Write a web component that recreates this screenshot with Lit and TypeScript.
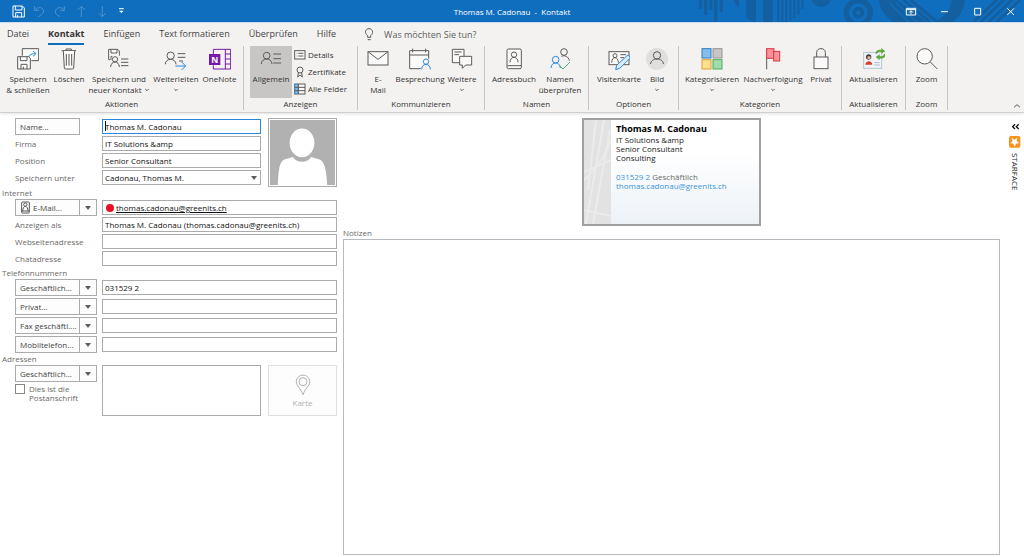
import { LitElement, html, svg, css, nothing } from "lit";
import { customElement, property } from "lit/decorators.js";
import { classMap } from "lit/directives/class-map.js";

interface Command {
  icon: string;
  lines: string[];
  menu?: boolean;
  active?: boolean;
}

interface Group {
  id: string;
  title: string;
  commands: Command[];
  list?: { icon: string; text: string }[];
}

const person = (x: number, y: number, r: number, w: number) => svg`
  <circle cx=${x} cy=${y} r=${r} />
  <path d="M${x - w} ${y + r + 15}C${x - w} ${y + r + 5} ${x - w / 2} ${y + r} ${x} ${y + r}S${x + w} ${y + r + 5} ${x + w} ${y + r + 15}" />`;

/* Each drawing lives on its own canvas, three units to one pixel. */
const icons: Record<string, { box: string; art: unknown }> = {
  saveClose: {
    box: "50 145 66 66",
    art: svg`
      <path class="paper" d="M66 168V147H115V183H93" />
      <path class="blue" d="M84 180C84 168 90 162 105 162M98 154L107 162L98 170" />
      <path class="paper" d="M52 171H85L90 176V208H52Z" />
      <path d="M60 171V183H80V171M62 208V194H80V208M69 201V208" />`,
  },
  trash: {
    box: "174 145 66 66",
    art: svg`
      <path d="M185 153H228M198 153V148H214V153" />
      <path class="paper" d="M190 154L193 205Q193 208 197 208H217Q221 208 221 205L224 154" />
      <path d="M199 163V198M207 163V198M215 163V198" />`,
  },
  saveNew: {
    box: "327 145 66 66",
    art: svg`
      <path class="paper" d="M334 180H329V149H356L361 154V168" />
      <path d="M336 149V160H354V149M336 180V170H340" />
      ${person(348, 179, 8, 13)}
      <path d="M366 178H388M366 188H388M366 198H388" />`,
  },
  forward: {
    box: "498 145 66 66",
    art: svg`
      ${person(515, 168, 11, 16)}
      <path d="M536 162H559M536 173H559M540 184H552" />
      <path class="blue" d="M529 199H560M548 187L560 199L548 211" />`,
  },
  onenote: {
    box: "624 145 66 66",
    art: svg`
      <path class="purple" d="M637 163V149H689V208H637V197M673 149V208M673 163H689M673 178H689M673 193H689" />
      <rect class="purple-fill" x="624" y="163" width="34" height="33" />
      <text class="glyph" x="641" y="189" text-anchor="middle">N</text>`,
  },
  general: {
    box: "780 145 66 66",
    art: svg`${person(800, 168, 10, 16)}<path d="M820 163H843M820 177H843M820 190H843" />`,
  },
  details: {
    box: "883 145 36 36",
    art: svg`<rect class="paper" x="885" y="150" width="31" height="25" />
      <path d="M891 158H893M896 158H911M891 166H893M896 166H911" />`,
  },
  certificate: {
    box: "880 193 36 36",
    art: svg`<circle cx="898" cy="205" r="9" /><path d="M893 214L891 226L898 220L905 226L903 214" />`,
  },
  fields: {
    box: "883 243 36 36",
    art: svg`<rect class="paper" x="885" y="246" width="31" height="30" />
      <rect class="blue-solid" x="886" y="247" width="9" height="28" />
      <path d="M885 256H916M885 266H916M896 246V276" />`,
  },
  mail: {
    box: "412 86 66 66",
    art: svg`<rect class="paper" x="415" y="97" width="60" height="40" /><path d="M416 98L445 120L474 98" />`,
  },
  meeting: {
    box: "539 86 66 66",
    art: svg`
      <path class="paper" d="M574 148H541V94H598V118" />
      <path d="M541 107H598M550 88V99M589 88V99" />
      <g class="blue">${person(590, 127, 8, 13)}</g>`,
  },
  more: {
    box: "664 86 66 66",
    art: svg`
      <path class="paper" d="M690 130H668V90H703V111" />
      <path d="M674 98H696M674 106H688" />
      <path class="paper" d="M690 111H726V137H708L698 147V137H690Z" />`,
  },
  book: {
    box: "817 86 66 66",
    art: svg`
      <rect class="paper" x="829" y="89" width="43" height="59" rx="4" />
      <path d="M830 139H871" />${person(850, 106, 8, 12)}`,
  },
  names: {
    box: "961 86 66 66",
    art: svg`
      <circle cx="1006" cy="98" r="10" />
      <path d="M998 111C1008 106 1020 112 1022 124" />
      <g class="blue">${person(981, 121, 10, 14)}</g>
      <path class="green" d="M993 140L1003 149L1024 128" />`,
  },
  card: {
    box: "54 86 66 66",
    art: svg`
      <rect class="paper" x="57" y="97" width="60" height="39" />
      ${person(75, 109, 6, 10)}
      <path d="M91 106H108M91 115H102" />
      <path class="blue pale" d="M77 151L80 138L112 108Q119 107 121 116L89 147Z" />`,
  },
  picture: {
    box: "170 86 66 66",
    art: svg`<circle class="disc" cx="203" cy="119" r="33" />${person(203, 108, 11, 19)}`,
  },
  categories: {
    box: "335 86 66 66",
    art: svg`
      <rect class="c-blue" x="338" y="88" width="27" height="28" />
      <rect class="c-gray" x="371" y="88" width="27" height="28" />
      <rect class="c-yellow" x="338" y="121" width="27" height="28" />
      <rect class="c-green" x="371" y="121" width="27" height="28" />`,
  },
  flag: {
    box: "516 86 66 66",
    art: svg`<path d="M530 88V150" />
      <rect class="c-red" x="530" y="88" width="22" height="29" />
      <rect class="c-red" x="551" y="96" width="18" height="29" />`,
  },
  lock: {
    box: "662 86 66 66",
    art: svg`<path d="M682 113V99C682 84 708 84 708 99V113" />
      <rect class="paper" x="674" y="113" width="42" height="35" />`,
  },
  refresh: {
    box: "818 86 66 66",
    art: svg`
      <rect class="id" x="820" y="99" width="54" height="48" />
      <circle class="hair" cx="835" cy="113" r="8" />
      <circle class="skin" cx="836" cy="115" r="5" />
      <path class="shirt" d="M825 136C825 122 846 122 846 136Z" />
      <path class="idline" d="M852 130H868M852 137H868" />
      <path class="leaf" d="M855 103C856 92 866 89 873 92V86L885 96L873 103V98C866 96 862 98 860 103Z" />
      <path class="leaf" d="M886 104C886 115 876 120 868 117V123L856 113L868 105V110C874 112 880 110 881 104Z" />`,
  },
  zoom: {
    box: "977 86 66 66",
    art: svg`<circle class="paper" cx="1003" cy="111" r="23" /><path d="M1020 128L1041 149" />`,
  },
  bulb: {
    box: "408 22 33 39",
    art: svg`<path d="M419 50V45C408 37 412 24 423 24S438 37 428 45V50ZM419 57H428" />`,
  },
  contact: {
    box: "60 276 33 39",
    art: svg`<rect x="65" y="279" width="23" height="33" rx="2" /><path d="M65 306H88" />${person(76, 287, 5, 8)}`,
  },
  pin: {
    box: "882 336 48 66",
    art: svg`<path d="M906 398C900 380 886 372 886 359C886 333 926 333 926 359C926 372 912 380 906 398Z" />
      <circle cx="906" cy="359" r="12" />`,
  },
  disk: {
    box: "36 13 39 39",
    art: svg`<path d="M39 16H67L73 22V49H39ZM46 16V28H66V16M47 49V36H65V49M53 43V49" />`,
  },
  undo: { box: "99 13 39 39", art: svg`<path d="M104 16V29H117M104 29C112 16 131 20 131 31C131 39 122 43 115 49" />` },
  redo: { box: "162 13 39 39", art: svg`<path d="M193 16V29H181M193 29C186 16 166 20 166 33C166 40 172 45 180 47" />` },
  up: { box: "222 13 39 39", art: svg`<path d="M241 49V17M230 28L241 17L252 28" />` },
  down: { box: "285 13 39 39", art: svg`<path d="M304 16V48M293 37L304 48L315 37" />` },
  custom: {
    box: "354 13 27 39",
    art: svg`<path d="M360 24H374" /><path class="white-fill" d="M360 30H374L367 37Z" />`,
  },
  ribbonMode: {
    box: "795 8 39 39",
    art: svg`<path d="M799 18H827V38H799ZM799 22H827M813 36V26M807 31L813 25L819 31" />`,
  },
  minimize: { box: "894 8 39 39", art: svg`<path d="M903 28H924" />` },
  maximize: { box: "992 8 39 39", art: svg`<path d="M1003 18H1021V38H1003Z" />` },
  close: { box: "1091 8 39 39", art: svg`<path d="M1101 18L1121 38M1121 18L1101 38" />` },
  chevronUp: { box: "1266 252 30 24", art: svg`<path d="M1272 268L1281 260L1290 268" />` },
  chevronDown: { box: "0 0 18 12", art: svg`<path d="M4 3L9 8L14 3" />` },
  collapse: {
    box: "1323 33 27 27",
    art: svg`<path class="bold" d="M1335 40L1328 47L1335 54M1346 40L1339 47L1346 54" />`,
  },
  star: {
    box: "1317 80 36 36",
    art: svg`<rect class="orange" x="1317" y="80" width="34" height="35" rx="5" />
      <path class="white-fill" d="M1324 85L1333 91L1342 85L1340 95L1348 101L1338 103L1334 112L1330 103L1321 101L1328 96Z" />`,
  },
};

@customElement("ui-icon")
export class UiIcon extends LitElement {
  @property() name = "";

  static styles = css`
    :host { display: block; flex: none; line-height: 0; }
    svg { fill: none; stroke: var(--icon-ink, #5c5a58); stroke-width: var(--icon-weight, 3); }
    .paper { fill: #fafafa; }
    .blue { stroke: #2b88d8; }
    .pale { fill: #d8ebf9; }
    .green { stroke: #4fae66; }
    .purple { stroke: #7719aa; }
    .purple-fill { fill: #7719aa; stroke: none; }
    .glyph { fill: #fff; stroke: none; font: bold 26px "Open Sans", sans-serif; }
    .blue-solid { fill: #83beec; stroke: #3a96dd; stroke-width: 2; }
    .disc { fill: #e1dfdd; stroke: none; }
    .c-blue { fill: #83beec; stroke: #2f7fc1; }
    .c-gray { fill: #c8c6c4; stroke: #979593; }
    .c-yellow { fill: #fce08e; stroke: #e0a030; }
    .c-green { fill: #a1dba8; stroke: #4fae66; }
    .c-red { fill: #ff9199; stroke: #d83b45; }
    .id { fill: #eef4f9; stroke: #b7c3cf; }
    .hair { fill: #3b3b3b; stroke: none; }
    .skin { fill: #eab28a; stroke: none; }
    .shirt { fill: #d9402a; stroke: none; }
    .idline { stroke: #a9bccd; }
    .leaf { fill: #5fa83c; stroke: none; }
    .white-fill { fill: #fff; stroke: none; }
    .orange { fill: #f7941d; stroke: none; }
    .bold { stroke: #111; stroke-width: 4; }
  `;

  render() {
    const icon = icons[this.name];
    if (!icon) return nothing;
    const [, , w, h] = icon.box.split(" ").map(Number);
    return html`<svg viewBox=${icon.box} width=${w / 3} height=${h / 3} aria-hidden="true">${icon.art}</svg>`;
  }
}

const groups: Group[] = [
  {
    id: "aktionen",
    title: "Aktionen",
    commands: [
      { icon: "saveClose", lines: ["Speichern", "& schließen"] },
      { icon: "trash", lines: ["Löschen"] },
      { icon: "saveNew", lines: ["Speichern und", "neuer Kontakt"], menu: true },
      { icon: "forward", lines: ["Weiterleiten", ""], menu: true },
      { icon: "onenote", lines: ["OneNote"] },
    ],
  },
  {
    id: "anzeigen",
    title: "Anzeigen",
    commands: [{ icon: "general", lines: ["Allgemein"], active: true }],
    list: [
      { icon: "details", text: "Details" },
      { icon: "certificate", text: "Zertifikate" },
      { icon: "fields", text: "Alle Felder" },
    ],
  },
  {
    id: "kommunizieren",
    title: "Kommunizieren",
    commands: [
      { icon: "mail", lines: ["E-", "Mail"] },
      { icon: "meeting", lines: ["Besprechung"] },
      { icon: "more", lines: ["Weitere", ""], menu: true },
    ],
  },
  {
    id: "namen",
    title: "Namen",
    commands: [
      { icon: "book", lines: ["Adressbuch"] },
      { icon: "names", lines: ["Namen", "überprüfen"] },
    ],
  },
  {
    id: "optionen",
    title: "Optionen",
    commands: [
      { icon: "card", lines: ["Visitenkarte"] },
      { icon: "picture", lines: ["Bild", ""], menu: true },
    ],
  },
  {
    id: "kategorien",
    title: "Kategorien",
    commands: [
      { icon: "categories", lines: ["Kategorisieren", ""], menu: true },
      { icon: "flag", lines: ["Nachverfolgung", ""], menu: true },
      { icon: "lock", lines: ["Privat"] },
    ],
  },
  { id: "aktualisieren", title: "Aktualisieren", commands: [{ icon: "refresh", lines: ["Aktualisieren"] }] },
  { id: "zoomen", title: "Zoom", commands: [{ icon: "zoom", lines: ["Zoom"] }] },
];

@customElement("contact-ribbon")
export class ContactRibbon extends LitElement {
  static styles = css`
    :host { display: block; background: #f3f2f1; color: #333; border-bottom: 1px solid #d2d0ce; box-shadow: 0 1px 3px #0000001f; }
    button { font: inherit; color: inherit; background: none; border: 0; padding: 0; margin: 0; }
    .tabs { display: flex; align-items: center; height: 23px; padding-left: 7px; gap: 19px; font-size: 9px; }
    .tab { height: 20px; border-bottom: 2px solid transparent; white-space: nowrap; box-sizing: border-box; color: #444; }
    .tab.current { font-weight: bold; border-color: #106ebe; color: #333; }
    .ask { display: flex; align-items: center; gap: 9px; margin-left: 9px; }
    .ask input { font: inherit; font-size: 9px; width: 140px; border: 0; padding: 0; background: none; outline: 0; }
    .ask input::placeholder { color: #605e5c; opacity: 1; }
    .bar { display: flex; padding-bottom: 2px; }
    .group { border-right: 1px solid #c8c6c4; box-sizing: border-box; height: 64px; display: flex; flex-direction: column; }
    .commands { display: grid; height: 54px; font-size: 8px; }
    .title { text-align: center; font-size: 8px; line-height: 12px; }
    .aktionen { width: 244px; }
    .aktionen .commands { grid-template-columns: 48px 34px 66px 48px 39px; padding-left: 4px; }
    .anzeigen { width: 114px; }
    .anzeigen .commands { grid-template-columns: 42px 60px; column-gap: 2px; padding-left: 6px; }
    .kommunizieren { width: 127px; }
    .kommunizieren .commands { grid-template-columns: 30px 54px 30px; padding-left: 5px; }
    .namen { width: 104px; }
    .namen .commands { grid-template-columns: 48px 44px; padding-left: 5px; }
    .optionen { width: 90px; }
    .optionen .commands { grid-template-columns: 50px 26px; padding-left: 5px; }
    .kategorien { width: 163px; }
    .kategorien .commands { grid-template-columns: 58px 64px 32px; padding-left: 4px; }
    .aktualisieren { width: 64px; }
    .aktualisieren .commands, .zoomen .commands { grid-template-columns: 1fr; }
    .zoomen { width: 42px; }
    .command { display: flex; flex-direction: column; align-items: center; padding-top: 2px; white-space: nowrap; line-height: 11px; height: 52px; }
    .command ui-icon { margin-bottom: 3px; }
    .command.active { background: #c8c6c4; }
    .line { display: flex; align-items: center; justify-content: center; gap: 2px; min-height: 11px; }
    .line ui-icon { margin: 0; }
    .list { display: flex; flex-direction: column; }
    .list button { display: flex; align-items: center; gap: 2px; white-space: nowrap; height: 17px; }
    .end { flex: 1; display: flex; align-items: flex-end; justify-content: flex-end; padding-right: 2px; }
  `;

  render() {
    const tabs = ["Datei", "Kontakt", "Einfügen", "Text formatieren", "Überprüfen", "Hilfe"];
    return html`
      <nav class="tabs">
        ${tabs.map((t) => html`<button class=${classMap({ tab: true, current: t === "Kontakt" })}>${t}</button>`)}
        <label class="ask"><ui-icon name="bulb"></ui-icon>
          <input aria-label="Was möchten Sie tun?" placeholder="Was möchten Sie tun?" /></label>
      </nav>
      <div class="bar">
        ${groups.map(
          (g) => html`<section class="group ${g.id}">
            <div class="commands">
              ${g.commands.map((c) => this.command(c))}
              ${g.list
                ? html`<div class="list">${g.list.map((l) => html`<button><ui-icon name=${l.icon}></ui-icon>${l.text}</button>`)}</div>`
                : nothing}
            </div>
            <div class="title">${g.title}</div>
          </section>`
        )}
        <div class="end"><button aria-label="Menüband reduzieren"><ui-icon name="chevronUp"></ui-icon></button></div>
      </div>`;
  }

  private command(c: Command) {
    return html`<button class=${classMap({ command: true, active: !!c.active })}>
      <ui-icon name=${c.icon}></ui-icon>
      ${c.lines.map(
        (l, i) => html`<span class="line">${l}${c.menu && i === c.lines.length - 1
          ? html`<ui-icon name="chevronDown"></ui-icon>` : nothing}</span>`
      )}
    </button>`;
  }
}

@customElement("contact-form")
export class ContactForm extends LitElement {
  static styles = css`
    :host { display: block; width: 337px; flex: none; font-size: 8px; color: #6b6967; }
    * { box-sizing: border-box; }
    button, input, select, textarea { font: inherit; margin: 0; border-radius: 0; }
    .section { display: grid; grid-template-columns: 87px 160px 75px; grid-auto-rows: 17px; align-items: center; padding-left: 15px; }
    .section > .field { grid-column: 2 / 4; }
    .section.phones { row-gap: 2px; }
    .identity { padding-bottom: 1px; }
    .identity > .field { grid-column: 2; width: 159px; }
    h2 { margin: 0; padding-left: 2px; font-size: 8px; font-weight: normal; line-height: 12px; }
    .field { position: relative; display: flex; align-items: center; height: 15px; border: 1px solid #ababab; background: #fff; }
    .field input, .field select { flex: 1; min-width: 0; height: 13px; border: 0; padding: 0 2px; background: none; color: #111; outline: 0; appearance: none; }
    .field.focus { border-color: #2b88d8; }
    .caret { position: absolute; left: 2px; top: 1px; width: 1px; height: 10px; background: #111; }
    .arrow { border: 3px solid transparent; border-top: 4px solid #605e5c; border-bottom: 0; }
    .choice .arrow { position: absolute; right: 3px; pointer-events: none; }
    .dot { width: 8px; height: 8px; border-radius: 50%; background: #e81123; margin-left: 3px; }
    .field .mail { text-decoration: underline; }
    .box { height: 17px; background: #fdfdfd; border: 1px solid #ababab; padding: 0 0 0 4px; width: 65px; color: #444; text-align: left; white-space: nowrap; display: flex; align-items: center; gap: 2px; }
    .split { display: flex; }
    .split .drop { width: 17px; padding: 0; border-left: 0; justify-content: center; }
    .photo { grid-column: 3; grid-row: 1 / 5; width: 69px; height: 69px; justify-self: end; align-self: start; border: 1px solid #ababab; padding: 1px; background: #fff; }
    .photo svg { display: block; width: 100%; height: 100%; }
    .address { grid-auto-rows: auto; align-items: start; }
    .address textarea { width: 159px; height: 51px; border: 1px solid #ababab; resize: none; outline: 0; display: block; }
    .check { display: flex; gap: 4px; padding-top: 2px; line-height: 9px; }
    .check input { appearance: none; width: 10px; height: 10px; border: 1px solid #8a8886; background: #fff; flex: none; }
    .map { width: 69px; height: 51px; justify-self: end; border: 1px solid #e1dfdd; background: #fdfdfd; color: #b3b0ad; display: flex; flex-direction: column; align-items: center; justify-content: center; gap: 1px; padding: 0; --icon-ink: #b3b0ad; }
  `;

  private split(text: string, icon = "") {
    return html`<div class="split">
      <button class="box">${icon ? html`<ui-icon name=${icon}></ui-icon>` : nothing}${text}</button>
      <button class="box drop" aria-label="Auswahl ${text}"><span class="arrow"></span></button>
    </div>`;
  }

  private plain(id: string, label: string, value = "") {
    return html`<label for=${id}>${label}</label><div class="field"><input id=${id} .value=${value} /></div>`;
  }

  render() {
    return html`
      <div class="section identity">
        <button class="box">Name...</button>
        <div class="field focus"><span class="caret"></span><input aria-label="Name" .value=${"Thomas M. Cadonau"} /></div>
        ${this.plain("firma", "Firma", "IT Solutions &amp")}
        ${this.plain("position", "Position", "Senior Consultant")}
        <label for="unter">Speichern unter</label>
        <div class="field choice"><select id="unter"><option>Cadonau, Thomas M.</option></select><span class="arrow"></span></div>
        <div class="photo">
          <svg viewBox="806 28 199 199" preserveAspectRatio="none" role="img" aria-label="Kontaktbild">
            <rect x="806" y="28" width="199" height="199" fill="#b1b1b1" />
            <ellipse cx="904" cy="98" rx="38" ry="44" fill="#fff" />
            <path fill="#fff" d="M830 227C832 175 836 155 850 149L876 141C890 161 918 161 932 141L958 149C972 155 978 175 981 227Z" />
          </svg>
        </div>
      </div>
      <h2>Internet</h2>
      <div class="section">
        ${this.split("E-Mail...", "contact")}
        <div class="field"><span class="dot"></span><input class="mail" aria-label="E-Mail" .value=${"thomas.cadonau@greenits.ch"} /></div>
        ${this.plain("anzeige", "Anzeigen als", "Thomas M. Cadonau (thomas.cadonau@greenits.ch)")}
        ${this.plain("web", "Webseitenadresse")}
        ${this.plain("chat", "Chatadresse")}
      </div>
      <h2>Telefonnummern</h2>
      <div class="section phones">
        ${[["Geschäftlich...", "031529 2"], ["Privat...", ""], ["Fax geschäftl....", ""], ["Mobiltelefon...", ""]].map(
          ([label, value]) => html`${this.split(label)}<div class="field"><input aria-label=${label} .value=${value} /></div>`
        )}
      </div>
      <h2>Adressen</h2>
      <div class="section address">
        <div>
          ${this.split("Geschäftlich...")}
          <label class="check"><input type="checkbox" /><span>Dies ist die<br />Postanschrift</span></label>
        </div>
        <textarea aria-label="Adresse"></textarea>
        <button class="map" disabled><ui-icon name="pin"></ui-icon>Karte</button>
      </div>`;
  }
}

@customElement("app-root")
export class AppRoot extends LitElement {
  static styles = css`
    :host { display: flex; flex-direction: column; min-height: 100vh; background: #fff; font-family: "Open Sans", "Noto Sans", sans-serif; font-size: 8px; color: #444; }
    * { box-sizing: border-box; }
    button { font: inherit; color: inherit; background: none; border: 0; padding: 0; margin: 0; }
    .titlebar { position: relative; display: grid; grid-template-columns: 1fr auto 1fr; align-items: center; height: 23px; background: #106ebe; color: #fff; border-bottom: 1px solid #c7dcee; --icon-ink: #fff; }
    .pattern { position: absolute; right: 0; top: 0; width: 384px; height: 22px; }
    .quick { display: flex; gap: 8px; padding-left: 12px; }
    .quick .off { opacity: 0.25; }
    .caption { font-size: 8px; }
    .window { position: relative; display: flex; justify-content: flex-end; gap: 20px; padding-right: 7px; }
    .work { flex: 1; display: flex; padding: 5px 0 2px; }
    .right { flex: 1; min-width: 0; display: flex; flex-direction: column; margin-left: 6px; }
    .card { width: 179px; height: 108px; align-self: center; border: 2px solid #a0a0a0; display: flex; background: linear-gradient(#fff 30%, #edf2f7); }
    .strip { width: 27px; height: 100%; flex: none; }
    .info { padding: 3px 0 0 5px; line-height: 9px; font-size: 8px; color: #222; font-style: normal; }
    .info strong { display: block; font-size: 9px; line-height: 12px; color: #000; }
    .info p { margin: 0 0 10px; }
    .info a { color: #3a96dd; text-decoration: none; }
    .kind { color: #6b6967; }
    .notes-label { color: #6b6967; line-height: 12px; padding-top: 1px; }
    .notes { flex: 1; border: 1px solid #b8b8c0; resize: none; outline: 0; font: inherit; width: 100%; display: block; }
    .side { width: 24px; display: flex; flex-direction: column; align-items: center; gap: 5px; padding: 4px 0 0 6px; }
    .side .name { writing-mode: vertical-rl; font-size: 8px; color: #222; }
  `;

  render() {
    return html`
      <header class="titlebar">
        <svg class="pattern" viewBox="0 0 1152 66" aria-hidden="true">
          <g fill="#145f9f">
            <path d="M177 0H187V27H177ZM192 0H202V45H192ZM208 0H217V30H208ZM222 0H232V64H222ZM239 0H249V37H239ZM281 0H297V24Q285 14 281 0ZM319 0H348V66Q330 64 319 52ZM369 0H398V66H369ZM412 0H418V66H412ZM424 0H430V66H424ZM436 0H442V66H436ZM448 0H454V62H448ZM460 0H466V54H460ZM472 0H478V44H472ZM484 0H490V27H484Z" />
            <path d="M515 0H573Q565 21 544 21T515 0Z" />
            <path d="M717 0H772L860 66H760Q720 40 717 0ZM935 0H976Q970 42 938 66H880Q930 45 935 0Z" />
          </g>
          <g fill="none" stroke="#145f9f">
            <circle cx="655" cy="38" r="36" stroke-width="16" /><circle cx="655" cy="38" r="12" stroke-width="11" />
            <path stroke-width="9" d="M790 0L870 66M812 0L892 66M1000 66L1070 0M1022 66L1092 0M1046 66L1116 0M1070 66L1140 0" />
          </g>
          <path fill="none" stroke="#106ebe" stroke-width="4" d="M750 10L806 66M768 8L830 66" />
        </svg>
        <div class="quick">
          <button aria-label="Speichern"><ui-icon name="disk"></ui-icon></button>
          ${[["undo", "Rückgängig"], ["redo", "Wiederholen"], ["up", "Vorheriges"], ["down", "Nächstes"]].map(
            ([icon, label]) => html`<button class="off" aria-label=${label}><ui-icon name=${icon}></ui-icon></button>`
          )}
          <button aria-label="Anpassen"><ui-icon name="custom"></ui-icon></button>
        </div>
        <div class="caption">Thomas M. Cadonau&nbsp; -&nbsp; Kontakt</div>
        <div class="window">
          ${[["ribbonMode", "Menüband"], ["minimize", "Minimieren"], ["maximize", "Maximieren"], ["close", "Schließen"]].map(
            ([icon, label]) => html`<button aria-label=${label}><ui-icon name=${icon}></ui-icon></button>`
          )}
        </div>
      </header>
      <contact-ribbon></contact-ribbon>
      <main class="work">
        <contact-form></contact-form>
        <div class="right">
          <address class="card">
            <svg class="strip" viewBox="0 0 27 104" preserveAspectRatio="none" aria-hidden="true">
              <rect width="27" height="104" fill="#e2e2e2" />
              <path d="M0 52L27 40M0 60Q18 44 27 20M2 104L20 0M9 104L26 10M0 90L27 96M12 0L4 70" fill="none" stroke="#ebebeb" stroke-width="2" />
            </svg>
            <div class="info">
              <strong>Thomas M. Cadonau</strong>
              <p>IT Solutions &amp;amp<br />Senior Consultant<br />Consulting</p>
              <a href="#">031529 2</a> <span class="kind">Geschäftlich</span><br />
              <a href="#">thomas.cadonau@greenits.ch</a>
            </div>
          </address>
          <label class="notes-label" for="notes">Notizen</label>
          <textarea class="notes" id="notes"></textarea>
        </div>
        <aside class="side">
          <button aria-label="Erweitern"><ui-icon name="collapse"></ui-icon></button>
          <ui-icon name="star"></ui-icon>
          <span class="name">STARFACE</span>
        </aside>
      </main>`;
  }
}
